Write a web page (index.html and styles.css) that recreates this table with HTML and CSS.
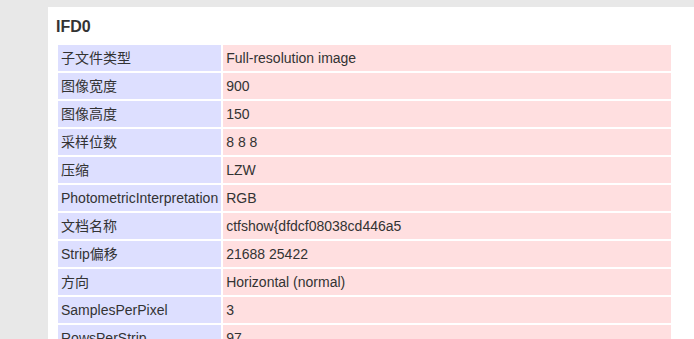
FILE: index.html
```html
<!DOCTYPE html>
<html lang="zh-CN">
<head>
<meta charset="utf-8">
<title>EXIF</title>
<link rel="stylesheet" href="styles.css">
</head>
<body>
<div class="panel">
  <h3 class="panel-title">IFD0</h3>
  <table class="exif">
    <tr><td class="key">子文件类型</td><td class="val">Full-resolution image</td></tr>
    <tr><td class="key">图像宽度</td><td class="val">900</td></tr>
    <tr><td class="key">图像高度</td><td class="val">150</td></tr>
    <tr><td class="key">采样位数</td><td class="val">8 8 8</td></tr>
    <tr><td class="key">压缩</td><td class="val">LZW</td></tr>
    <tr><td class="key">PhotometricInterpretation</td><td class="val">RGB</td></tr>
    <tr><td class="key">文档名称</td><td class="val">ctfshow{dfdcf08038cd446a5</td></tr>
    <tr><td class="key">Strip偏移</td><td class="val">21688 25422</td></tr>
    <tr><td class="key">方向</td><td class="val">Horizontal (normal)</td></tr>
    <tr><td class="key">SamplesPerPixel</td><td class="val">3</td></tr>
    <tr><td class="key">RowsPerStrip</td><td class="val">97</td></tr>
  </table>
</div>
</body>
</html>
```
FILE: styles.css
```css
html, body {
  margin: 0;
  padding: 0;
}

body {
  background: #e8e8e8;
  color: #333;
  font-family: "Liberation Sans", Arial, "Noto Sans CJK SC", sans-serif;
  font-size: 14px;
}

.panel {
  background: #fff;
  margin: 7px 0 0 48px;
  padding: 11px 8px 8px 8px;
}

.panel-title {
  margin: 0 0 7px 0;
  font-size: 16px;
  font-weight: bold;
  line-height: 18px;
  color: #333;
}

.exif {
  width: 617px;
  border-collapse: separate;
  border-spacing: 2px;
}

.exif td {
  padding: 3px;
  line-height: 20px;
  white-space: nowrap;
}

.exif .key {
  background: #dddfff;
  width: 1px;
}

.exif .val {
  background: #ffdfe0;
}
```
